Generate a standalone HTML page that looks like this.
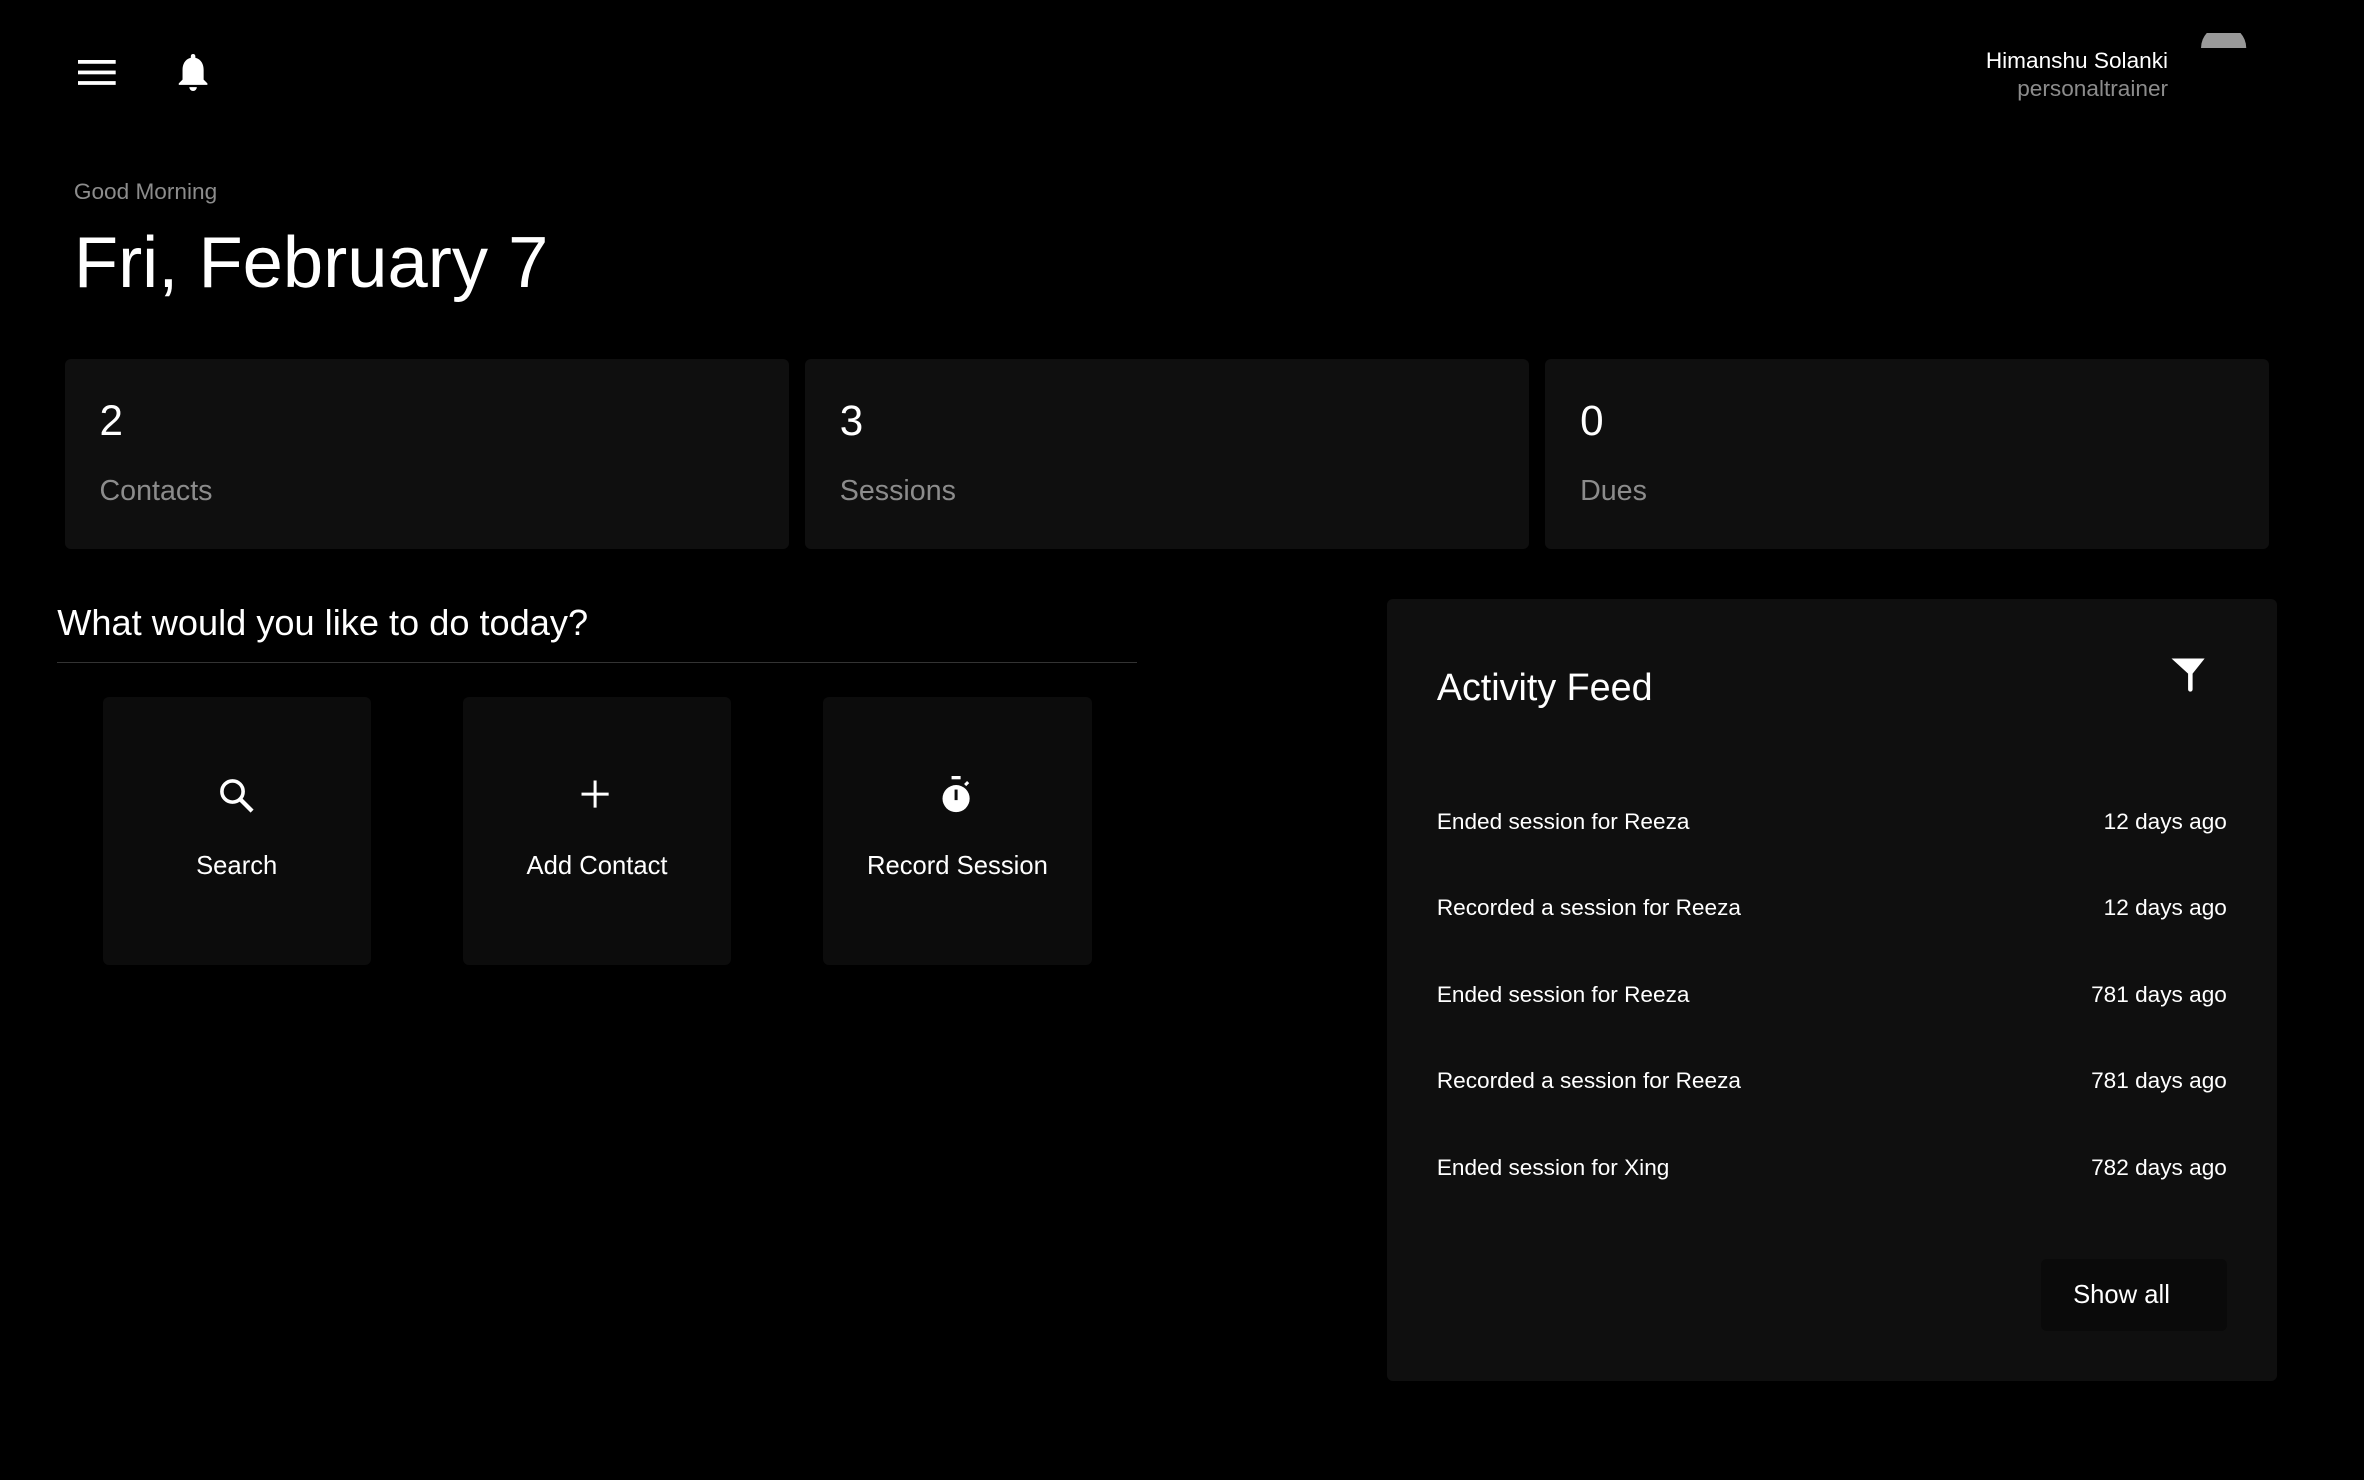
<!DOCTYPE html>
<html><head><meta charset="utf-8"><style>
html,body{margin:0;padding:0;background:#000;width:2364px;height:1480px;overflow:hidden}
#w{zoom:1.5077;width:1568px;height:982px;position:relative;font-family:"Liberation Sans",sans-serif;color:#fff}
.a{position:absolute}
.card{position:absolute;top:238px;width:480px;height:126px;background:#0f0f0f;border-radius:4px}
.num{position:absolute;left:23px;top:25px;font-size:28px;line-height:32px}
.lab{position:absolute;left:23px;top:76px;font-size:19px;color:#8c8c8c;line-height:24px}
.tile{position:absolute;top:462px;width:178px;height:178px;background:#0c0c0c;border-radius:4px}
.tile svg{position:absolute;left:76px;top:53px}
.tile div{position:absolute;left:0;right:0;top:103px;text-align:center;font-size:17px}
.row{position:absolute;left:33px;right:33px;font-size:15px;line-height:20px}
.row span{float:right}
</style></head><body><div id="w">
<svg class="a" style="left:52px;top:40px" width="25" height="17"><rect y="0" width="25" height="2.5" fill="#fff"/><rect y="7" width="25" height="2.5" fill="#fff"/><rect y="14" width="25" height="2.5" fill="#fff"/></svg>
<svg class="a" style="left:116px;top:34px" width="24" height="28" viewBox="0 0 24 28"><path d="M12 2c-1 0-1.5.7-1.5 1.5v1C6.5 5.5 5 9 5 12.5V19l-2.5 2.5v1h19v-1L19 19v-6.5C19 9 17.5 5.5 13.5 4.5v-1C13.5 2.7 13 2 12 2zM9.5 24a2.5 2.5 0 0 0 5 0z" fill="#fff"/></svg>
<div class="a" style="right:130px;top:31px;font-size:15px;text-align:right;line-height:19px">Himanshu Solanki<br><span style="color:#8c8c8c">personaltrainer</span></div>
<svg class="a" style="left:1458px;top:22px" width="34" height="10"><path d="M2 10 A15 15 0 0 1 32 10Z" fill="#999"/></svg>
<div class="a" style="left:49px;top:119px;font-size:15px;color:#8c8c8c">Good Morning</div>
<div class="a" style="left:49px;top:145px;font-size:48px;line-height:58px">Fri, February 7</div>
<div class="card" style="left:43px"><div class="num">2</div><div class="lab">Contacts</div></div>
<div class="card" style="left:534px"><div class="num">3</div><div class="lab">Sessions</div></div>
<div class="card" style="left:1025px"><div class="num">0</div><div class="lab">Dues</div></div>
<div class="a" style="left:38px;top:398px;font-size:24px;line-height:30px">What would you like to do today?</div>
<div class="a" style="left:38px;top:439px;width:716px;height:1px;background:#333"></div>
<div class="tile" style="left:68px"><svg width="26" height="26" viewBox="0 0 24 24"><circle cx="9.5" cy="9.5" r="6.5" stroke="#fff" stroke-width="2.2" fill="none"/><path d="M14 14L21.5 21.5" stroke="#fff" stroke-width="2.6"/></svg><div>Search</div></div>
<div class="tile" style="left:307px"><svg width="24" height="24" viewBox="0 0 24 24"><path d="M12 3v18M3 12h18" stroke="#fff" stroke-width="2"/></svg><div>Add Contact</div></div>
<div class="tile" style="left:546px"><svg width="24" height="26" viewBox="0 0 24 26"><rect x="9" y="0" width="6" height="2.2" fill="#fff"/><circle cx="12" cy="15" r="9" fill="#fff"/><rect x="11" y="9" width="2" height="7" fill="#0c0c0c"/><path d="M18 6l2-2" stroke="#fff" stroke-width="2"/></svg><div>Record Session</div></div>
<div class="a" style="left:920px;top:397px;width:590px;height:519px;background:#0f0f0f;border-radius:4px">
<div class="a" style="left:33px;top:43px;font-size:25px;line-height:32px">Activity Feed</div>
<svg class="a" style="left:519px;top:39px" width="24" height="24" viewBox="0 0 24 24"><path d="M1 1h22l-8 10v10.5a1.5 1.5 0 0 1-3 0V11z" fill="#fff"/></svg>
<div class="row" style="top:138px">Ended session for Reeza<span>12 days ago</span></div>
<div class="row" style="top:195px">Recorded a session for Reeza<span>12 days ago</span></div>
<div class="row" style="top:253px">Ended session for Reeza<span>781 days ago</span></div>
<div class="row" style="top:310px">Recorded a session for Reeza<span>781 days ago</span></div>
<div class="row" style="top:368px">Ended session for Xing<span>782 days ago</span></div>
<div class="a" style="left:434px;top:438px;width:123px;height:48px;background:#0a0a0a;border-radius:4px;font-size:17px;line-height:48px;text-indent:21px">Show all</div>
</div>
</div></body></html>
